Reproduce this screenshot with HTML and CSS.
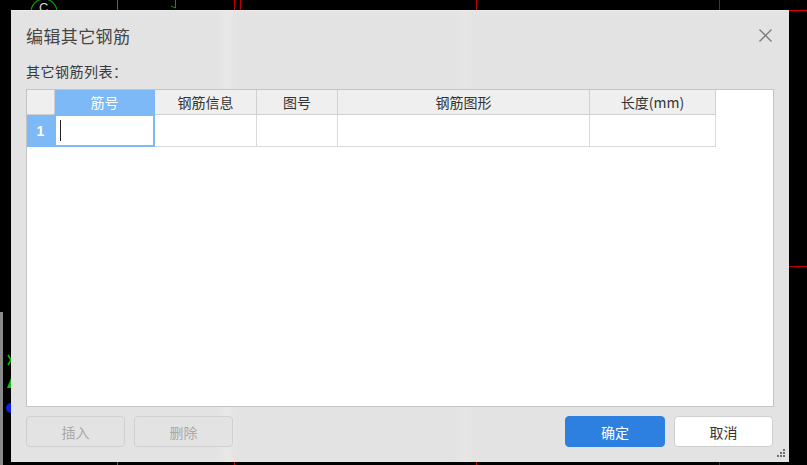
FILE: index.html
```html
<!DOCTYPE html>
<html lang="zh-CN">
<head>
<meta charset="UTF-8">
<meta name="viewport" content="width=device-width,initial-scale=1">
<title>编辑其它钢筋</title>
<link rel="stylesheet" href="styles.css">
</head>
<body>
<!-- CAD drawing behind the dialog -->
<svg class="canvas" width="807" height="465" viewBox="0 0 807 465">
  <circle cx="44" cy="12" r="13" fill="none" stroke="#0a9a0a" stroke-width="1.2"/>
  <text x="39" y="12" fill="#d8d8d8" font-size="13" font-family="Liberation Sans, sans-serif">C</text>
  <line x1="117.5" y1="0" x2="117.5" y2="10" stroke="#0a9a0a"/>
  <path d="M175.5 0 V8 M171 6 L175.5 8" fill="none" stroke="#0a9a0a"/>
  <line x1="234.5" y1="0" x2="234.5" y2="10" stroke="#c00000"/>
  <line x1="240.5" y1="0" x2="240.5" y2="10" stroke="#c00000"/>
  <line x1="476.5" y1="0" x2="476.5" y2="10" stroke="#c00000"/>
  <line x1="719.5" y1="0" x2="719.5" y2="10" stroke="#c00000"/>
  <line x1="789" y1="10.5" x2="807" y2="10.5" stroke="#e00000"/>
  <line x1="789" y1="266.5" x2="807" y2="266.5" stroke="#c00000"/>
  <rect x="0" y="312" width="3" height="153" fill="#8a8a8a"/>
  <path d="M8 355 L11 360 M8 365 L11 360" fill="none" stroke="#10c010" stroke-width="1.5"/>
  <polygon points="11,378 7,388 11,388" fill="#10c010"/>
  <circle cx="11" cy="408" r="5" fill="#1020e0"/>
  <line x1="117.5" y1="462" x2="117.5" y2="465" stroke="#0a9a0a"/>
  <line x1="234.5" y1="462" x2="234.5" y2="465" stroke="#c00000"/>
  <line x1="476.5" y1="462" x2="476.5" y2="465" stroke="#c00000"/>
  <line x1="719.5" y1="462" x2="719.5" y2="465" stroke="#c00000"/>
</svg>

<div class="dialog">
  <div class="titlebar">
    <span class="title">编辑其它钢筋</span>
    <svg class="close" width="13" height="13" viewBox="0 0 13 13">
      <path d="M0.5 0.5 L12.5 12.5 M12.5 0.5 L0.5 12.5" stroke="#7a7a7a" stroke-width="1.3"/>
    </svg>
  </div>

  <div class="label">其它钢筋列表：</div>

  <div class="sheet">
    <div class="grid">
      <div class="cell head corner"></div>
      <div class="cell head active">筋号</div>
      <div class="cell head">钢筋信息</div>
      <div class="cell head">图号</div>
      <div class="cell head">钢筋图形</div>
      <div class="cell head">长度(mm)</div>

      <div class="cell rownum">1</div>
      <div class="cell editing"><span class="caret"></span></div>
      <div class="cell"></div>
      <div class="cell"></div>
      <div class="cell"></div>
      <div class="cell"></div>
    </div>
  </div>

  <div class="footer">
    <div class="group">
      <button class="btn" disabled>插入</button>
      <button class="btn" disabled>删除</button>
    </div>
    <div class="group">
      <button class="btn primary">确定</button>
      <button class="btn plain">取消</button>
    </div>
  </div>

  <!-- resize grip -->
  <svg class="grip" width="9" height="9" viewBox="0 0 9 9">
    <rect x="6" y="0" width="2" height="2" fill="#6e6e6e"/>
    <rect x="3" y="3" width="2" height="2" fill="#6e6e6e"/>
    <rect x="6" y="3" width="2" height="2" fill="#6e6e6e"/>
    <rect x="0" y="6" width="2" height="2" fill="#6e6e6e"/>
    <rect x="3" y="6" width="2" height="2" fill="#6e6e6e"/>
    <rect x="6" y="6" width="2" height="2" fill="#6e6e6e"/>
  </svg>
</div>
</body>
</html>
```

FILE: styles.css
```css
body {
  margin: 0;
  width: 807px;
  height: 465px;
  overflow: hidden;
  background: #000;
  font-family: "Noto Sans CJK SC", "Noto Sans", sans-serif;
  position: relative;
}

.canvas {
  position: absolute;
  left: 0;
  top: 0;
}

/* dialog window */
.dialog {
  position: absolute;
  left: 11px;
  top: 10px;
  width: 778px;
  height: 452px;
  box-sizing: border-box;
  padding: 0 15px 15px;
  display: flex;
  flex-direction: column;
  background-color: #e3e3e3;
  background-image:
    linear-gradient(90deg, transparent 206px, #e8e8e8 216px, transparent 226px),
    linear-gradient(90deg, transparent 444px, #e6e6e6 454px, transparent 464px);
  border-top: 1px solid #ececec;
}

.titlebar {
  height: 49px;
  display: flex;
  align-items: center;
  justify-content: space-between;
}
.title {
  font-size: 17px;
  color: #454545;
  letter-spacing: 0.4px;
}
.close {
  margin-right: 2px;
}

.label {
  height: 22px;
  line-height: 22px;
  font-size: 14px;
  color: #3a3a3a;
  letter-spacing: 0.5px;
  margin-bottom: 7px;
}

/* spreadsheet area */
.sheet {
  flex: 1;
  background: #fff;
  border: 1px solid #c4c4c4;
}
.grid {
  display: grid;
  grid-template-columns: 28px 100px 102px 81px 252px 126px;
  grid-template-rows: 25px 32px;
}
.cell {
  box-sizing: border-box;
  border-right: 1px solid #dadada;
  border-bottom: 1px solid #dadada;
  font-size: 14px;
  color: #333;
  display: flex;
  align-items: center;
  justify-content: center;
  position: relative;
}
.head {
  background: #efefef;
  border-color: #d0d0d0;
  padding-bottom: 1px;
}
.head.active {
  background: #7db9f6;
  color: #fff;
  border-color: #7db9f6;
}
.rownum {
  background: #7db9f6;
  color: #fff;
  font-weight: bold;
  font-family: "Liberation Sans", sans-serif;
  border-color: #7db9f6;
}
.editing {
  justify-content: flex-start;
  border: 2px solid #7db9f6;
  margin: -1px 0 0 -1px;
  padding-left: 4px;
}
.caret {
  width: 1px;
  height: 21px;
  background: #222;
}

/* buttons */
.footer {
  margin-top: 9px;
  display: flex;
  justify-content: space-between;
  padding-right: 1px;
}
.group {
  display: flex;
  gap: 9px;
}
.btn {
  width: 99px;
  height: 31px;
  box-sizing: border-box;
  border-radius: 4px;
  border: 1px solid #d0d0d0;
  background: #e3e3e3;
  font-family: "Noto Sans CJK SC", "Noto Sans", sans-serif;
  font-size: 14px;
  color: #333;
  padding: 0;
}
.btn:disabled {
  color: #a9a9a9;
}
.btn.primary {
  width: 100px;
  background: #2e80e0;
  border-color: #2e80e0;
  color: #fff;
}
.btn.plain {
  background: #fff;
  border-color: #cfcfcf;
}

.grip {
  position: absolute;
  right: 3px;
  bottom: 4px;
}
```
